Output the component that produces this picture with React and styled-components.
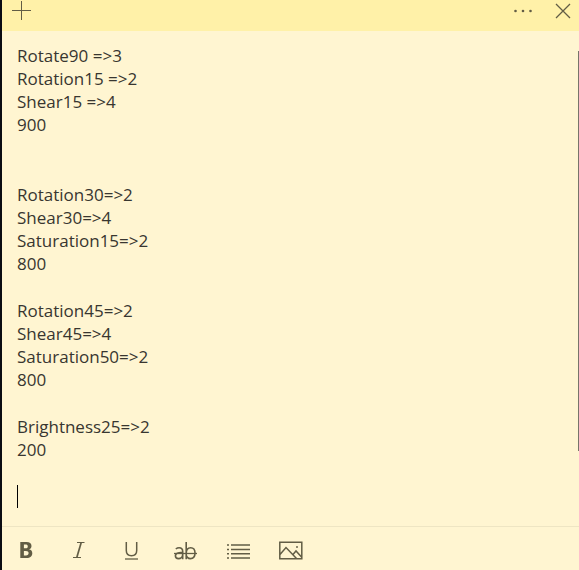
import React from "react";
import styled, { createGlobalStyle } from "styled-components";

const GlobalStyle = createGlobalStyle`
  * { box-sizing: border-box; }
  body {
    margin: 0;
    background: #fff5d1;
    font-family: "Segoe UI", "Open Sans", "Noto Sans", sans-serif;
  }
`;

const Note = styled.main`
  display: flex;
  flex-direction: column;
  min-height: 100vh;
  border-left: 2px solid #0b0c12;
  background: #fff5d1;
  color: #383630;
`;

const TitleBar = styled.header`
  display: flex;
  align-items: center;
  height: 31px;
  padding-bottom: 9px;
  background: #fff1a8;
`;

const IconButton = styled.button`
  display: flex;
  align-items: center;
  justify-content: center;
  width: ${({ $width }) => $width}px;
  height: 22px;
  padding: 0;
  border: 0;
  background: transparent;
  color: #625d45;
`;

const Spacer = styled.div`
  flex: 1;
`;

const Body = styled.section`
  display: flex;
  flex: 1;
  padding: 13px 0 0 15px;
`;

const Editor = styled.div`
  flex: 1;
  outline: none;
  font-size: 17px;
  line-height: 23px;
`;

const Group = styled.p`
  margin: 0 0 ${({ $gap }) => $gap}px;
`;

const Caret = styled.span`
  display: block;
  width: 1px;
  height: 23px;
  background: #000;
`;

const ScrollThumb = styled.div`
  width: 1px;
  height: 400px;
  margin-top: 7px;
  background: #77746a;
`;

const Toolbar = styled.footer`
  display: flex;
  align-items: center;
  gap: 5px;
  height: 44px;
  padding-top: 3px;
  border-top: 1px solid #eee5c3;
`;

const groups = [
  { gap: 47, lines: ["Rotate90 =>3", "Rotation15 =>2", "Shear15 =>4", "900"] },
  { gap: 24, lines: ["Rotation30=>2", "Shear30=>4", "Saturation15=>2", "800"] },
  { gap: 24, lines: ["Rotation45=>2", "Shear45=>4", "Saturation50=>2", "800"] },
  { gap: 24, lines: ["Brightness25=>2", "200"] },
];

const Icon = ({ width = 24, height = 22, children }) => (
  <svg
    width={width}
    height={height}
    viewBox={`0 0 ${width} ${height}`}
    fill="none"
    stroke="currentColor"
    aria-hidden="true"
  >
    {children}
  </svg>
);

const tools = [
  {
    label: "Bold",
    icon: (
      <Icon>
        <path
          fill="currentColor"
          stroke="none"
          fillRule="evenodd"
          d="M6.300 3h6.200c3.200 0 5 1.400 5 3.900 0 1.700-1 2.900-2.600 3.400 2.200.3 3.400 1.800 3.400 3.900 0 2.900-2.100 4.800-5.600 4.800H6.300zM9.900 5.600v3.700h1.600c1.500 0 2.300-.7 2.300-1.900s-.8-1.800-2.400-1.800zM9.900 11.900v4.500h2.100c1.700 0 2.600-.8 2.600-2.300s-.9-2.200-2.700-2.200z"
        />
      </Icon>
    ),
  },
  {
    label: "Italic",
    icon: (
      <Icon>
        <path strokeWidth="1.2" d="M10 3.500h7.500M6 18.500h8" />
        <path strokeWidth="1.700" d="M14.200 3.500 9.800 18.500" />
      </Icon>
    ),
  },
  {
    label: "Underline",
    icon: (
      <Icon>
        <path strokeWidth="1.500" d="M6.300 3v8.500c0 3.400 1.900 5.200 5.200 5.200s5.200-1.800 5.200-5.200V3" />
        <path d="M5 20h13" strokeWidth="1.300" />
      </Icon>
    ),
  },
  {
    label: "Strikethrough",
    icon: (
      <Icon>
        <path
          strokeWidth="1.600"
          d="M2.800 10c1-.8 2-1.200 3.300-1.200 2.500 0 3.600 1.300 3.600 3.800V20.200M9.700 13.200l-3.600.5c-2.500.4-3.700 1.300-3.700 3 0 1.700 1.200 2.900 3.100 2.900 2.400 0 4.200-1.900 4.200-4.400M13.200 3v17.200M13.200 14.400c0-3.300 1.800-5.600 4.500-5.600s4.300 1.900 4.300 5.200-1.800 5.600-4.600 5.600c-2.500 0-4.200-1.900-4.200-4.400"
        />
        <path strokeWidth="1.300" d="M1 14.500h23" />
      </Icon>
    ),
  },
  {
    label: "Bulleted list",
    icon: (
      <Icon>
        <path
          strokeWidth="1.500"
          d="M5 6h19M5 10.500h19M5 14.700h19M5 19h19M1 6h2M1 10.500h2M1 14.700h2M1 19h2"
        />
      </Icon>
    ),
  },
  {
    label: "Add image",
    icon: (
      <Icon>
        <path strokeWidth="1.500" d="M.8 3.300h22v16.500H.8zM1 15.500l6-7 10.500 11M14 15.500l3-3.500 5.500 6" />
        <path fill="currentColor" stroke="none" opacity=".7" d="M17 7h2v2h-2z" />
      </Icon>
    ),
  },
];

export default function App() {
  return (
    <>
      <GlobalStyle />
      <Note>
        <TitleBar>
          <IconButton $width={39} aria-label="New note">
            <Icon width={19} height={20}>
              <path d="M0 9.500h19M9.500 0v19" />
            </Icon>
          </IconButton>
          <Spacer />
          <IconButton $width={48} aria-label="Menu">
            <Icon width={20} height={4}>
              <g fill="currentColor" stroke="none">
                <circle cx="2.500" cy="2" r="1.300" />
                <circle cx="10" cy="2" r="1.300" />
                <circle cx="17.500" cy="2" r="1.300" />
              </g>
            </Icon>
          </IconButton>
          <IconButton $width={32} aria-label="Close note">
            <Icon width={16} height={16}>
              <path strokeWidth="1.300" d="m1 1 14 14M15 1 1 15" />
            </Icon>
          </IconButton>
        </TitleBar>
        <Body>
          <Editor
            role="textbox"
            aria-multiline="true"
            aria-label="Note text"
            contentEditable
            suppressContentEditableWarning
            spellCheck={false}
          >
            {groups.map(({ gap, lines }) => (
              <Group key={lines[0]} $gap={gap}>
                {lines.map((line, index) => (
                  <React.Fragment key={line}>
                    {index > 0 && <br />}
                    {line}
                  </React.Fragment>
                ))}
              </Group>
            ))}
            <Caret />
          </Editor>
          <ScrollThumb />
        </Body>
        <Toolbar role="toolbar" aria-label="Formatting">
          {tools.map(({ label, icon }) => (
            <IconButton key={label} $width={48} aria-label={label}>
              {icon}
            </IconButton>
          ))}
        </Toolbar>
      </Note>
    </>
  );
}
